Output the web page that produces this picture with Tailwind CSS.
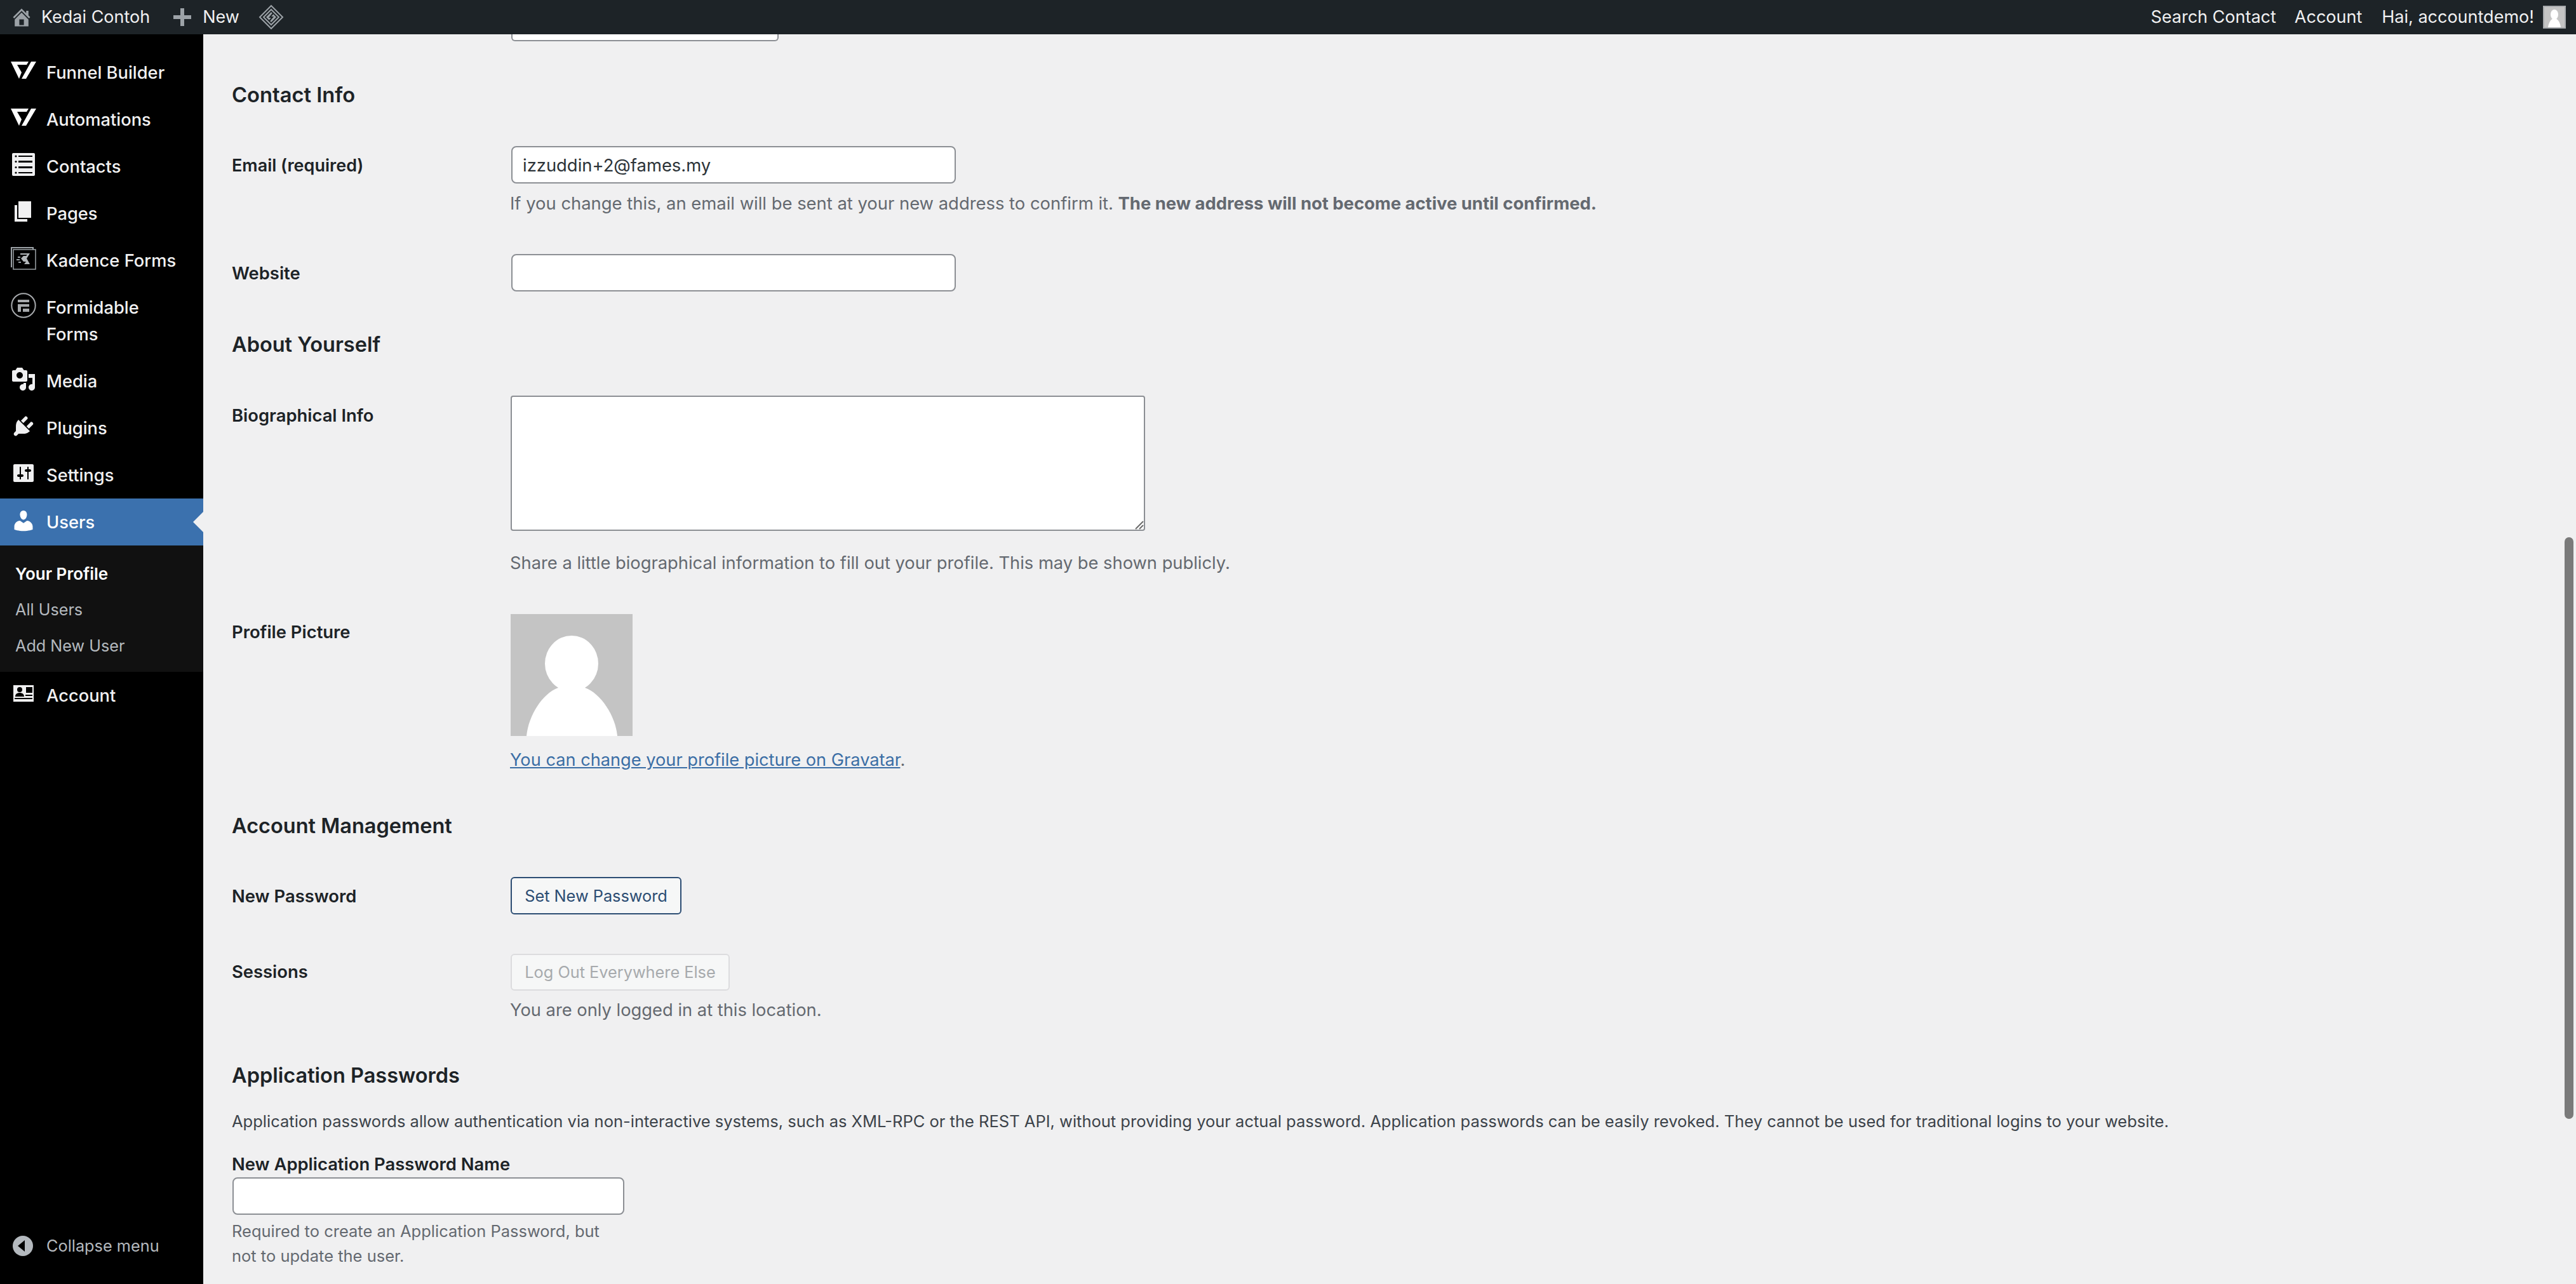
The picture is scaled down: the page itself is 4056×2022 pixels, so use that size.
<!DOCTYPE html>
<html lang="en">
<head>
  <meta charset="UTF-8" />
  <title>Profile</title>
  <script src="https://cdn.jsdelivr.net/npm/@tailwindcss/browser@4"></script>
</head>
<body class="relative h-[2022px] w-[4056px] overflow-hidden bg-[#f0f0f1] font-['Inter',sans-serif] text-[27.4px] leading-[40px] text-[#1d2327]">

  <!-- Admin bar -->
  <header class="flex h-[54px] items-center justify-between bg-[#1d2327] text-[27px] text-[#f0f0f1]">
    <div class="flex items-center">
      <svg class="ml-[16px] h-[36px] w-[36px] fill-[#9ca2a7]" viewBox="0 0 20 20"><path d="M16 8.5l1.53 1.53-1.06 1.06L10 4.62l-6.47 6.47-1.06-1.06L10 2.5l4 4v-2h2v4zm-6-2.46l6 5.99V18H4v-5.97zM12 17v-5H8v5h4z"/></svg>
      <span class="ml-[13px]">Kedai Contoh</span>
      <svg class="ml-[37px] h-[28px] w-[28px] fill-[#9ca2a7]" viewBox="0 0 28 28"><path d="M11 0h6v11h11v6H17v11h-6V17H0v-6h11z"/></svg>
      <span class="ml-[18px]">New</span>
      <svg class="ml-[30px] h-[40px] w-[40px]" viewBox="0 0 40 40" fill="none" stroke="#9ca2a7" stroke-width="2"><path d="M20 2 38 20 20 38 2 20z"/><path d="M20 8 32 20 20 32 8 20z"/><path fill="#9ca2a7" stroke="none" d="M20 12 28 20 20 28 12 20z"/><path stroke="#1d2327" stroke-width="2" d="M23 14l-5 6h4l-5 6"/></svg>
    </div>
    <div class="flex items-center">
      <span>Search Contact</span>
      <span class="ml-[29px]">Account</span>
      <span class="ml-[31px]">Hai, accountdemo!</span>
      <div class="ml-[14px] mr-[16px] flex h-[36px] w-[36px] items-end justify-center overflow-hidden border-2 border-[#a7aaad] bg-[#c4c4c4]">
        <svg class="h-[28px] w-[24px] fill-white" viewBox="0 0 24 28"><ellipse cx="12" cy="8" rx="6" ry="8"/><path d="M2 28C3 20 7 14 12 14s9 6 10 14z"/></svg>
      </div>
    </div>
  </header>

  <div class="flex h-[1968px]">
    <!-- Sidebar -->
    <aside class="relative flex w-[320px] shrink-0 flex-col bg-black pt-[23px] text-[27.3px] font-medium text-[#f0f0f1]">
      <a class="flex h-[74px] items-center">
        <span class="flex w-[73px] shrink-0 justify-center -mt-[6px]"><svg class="h-[28px] w-[40px] fill-white" viewBox="0 0 40 28"><path d="M0 0H28L25 5H10L17 17 13 27zM32 0H40L24 27H17z"/></svg></span>
        <span class="pt-[1px]">Funnel Builder</span>
      </a>
      <a class="flex h-[74px] items-center">
        <span class="flex w-[73px] shrink-0 justify-center -mt-[6px]"><svg class="h-[28px] w-[40px] fill-white" viewBox="0 0 40 28"><path d="M0 0H28L25 5H10L17 17 13 27zM32 0H40L24 27H17z"/></svg></span>
        <span class="pt-[1px]">Automations</span>
      </a>
      <a class="flex h-[74px] items-center">
        <span class="flex w-[73px] shrink-0 justify-center -mt-[6px]"><svg class="h-[36px] w-[36px]" viewBox="0 0 36 36"><rect width="36" height="36" rx="2" fill="#f0f0f1"/><path fill="#000" d="M10 4h22v2H10zM10 12h22v3H10zM10 21h22v3H10zM10 30h22v2H10z"/><circle cx="6" cy="5" r="1.6" fill="#000"/><circle cx="6" cy="13.5" r="1.6" fill="#000"/><circle cx="6" cy="22.5" r="1.6" fill="#000"/><circle cx="6" cy="31" r="1.6" fill="#000"/></svg></span>
        <span class="pt-[1px]">Contacts</span>
      </a>
      <a class="flex h-[74px] items-center">
        <span class="flex w-[73px] shrink-0 justify-center -mt-[6px]"><svg class="h-[40px] w-[40px] fill-[#f0f0f1]" viewBox="0 0 20 20"><path d="M6 15V2h10v13H6zm-1 1h8v2H3V5h2v11z"/></svg></span>
        <span class="pt-[1px]">Pages</span>
      </a>
      <a class="flex h-[74px] items-center">
        <span class="flex w-[73px] shrink-0 justify-center -mt-[6px]"><svg class="h-[36px] w-[40px]" viewBox="0 0 40 36" fill="none"><path d="M1 32V1h34v3" stroke="#9ca2a7" stroke-width="2"/><path d="M4 4h35v31H4z" stroke="#9ca2a7" stroke-width="1.5"/><path fill="#b4b8bb" d="M15 10h15l-5 8 5 9H21l3-4h-4l-4-5 4-4h4l2-2h-11z"/><path stroke="#9ca2a7" stroke-width="2" d="M11 16h4M9 20h5M12 24h4"/></svg></span>
        <span class="pt-[1px]">Kadence Forms</span>
      </a>
      <a class="flex h-[116px] items-start pt-[16px]">
        <span class="flex w-[73px] shrink-0 justify-center -mt-[2px]"><svg class="h-[40px] w-[40px]" viewBox="0 0 40 40"><circle cx="20" cy="20" r="18.7" fill="none" stroke="#a7aaad" stroke-width="2"/><path fill="#a7aaad" d="M11 11h18v4H11zM11 18h18v4H16v8h-5zM19 25h10v5H19z"/></svg></span>
        <span class="pt-[1px] leading-[42px]">Formidable<br />Forms</span>
      </a>
      <a class="flex h-[74px] items-center">
        <span class="flex w-[73px] shrink-0 justify-center -mt-[6px]"><svg class="h-[40px] w-[40px] fill-[#f0f0f1]" viewBox="0 0 20 20"><path d="M13 11V4c0-.55-.45-1-1-1h-1.67L9 1H5L3.67 3H2c-.55 0-1 .45-1 1v7c0 .55.45 1 1 1h10c.55 0 1-.45 1-1zM7 4.5c1.38 0 2.5 1.12 2.5 2.5S8.38 9.5 7 9.5 4.5 8.38 4.5 7 5.62 4.5 7 4.5zM14 6h5v10.5c0 1.38-1.12 2.5-2.5 2.5S14 17.88 14 16.5s1.12-2.5 2.5-2.5c.17 0 .34.02.5.05V9h-3V6zm-4 8.05V13h2v3.5c0 1.38-1.12 2.5-2.5 2.5S7 17.88 7 16.5 8.12 14 9.5 14c.17 0 .34.02.5.05z"/></svg></span>
        <span class="pt-[1px]">Media</span>
      </a>
      <a class="flex h-[74px] items-center">
        <span class="flex w-[73px] shrink-0 justify-center -mt-[6px]"><svg class="h-[40px] w-[40px] fill-[#f0f0f1]" viewBox="0 0 20 20"><path d="M13.11 4.36L9.87 7.6 8 5.73l3.24-3.24c.35-.34 1.05-.2 1.56.32.52.51.66 1.21.31 1.55zm-8 1.77l.91-1.12 9.01 9.01-1.19.84c-.71.71-2.63 1.16-3.82 1.16H6.14L4.9 17.26c-.59.59-1.54.59-2.12 0-.59-.58-.59-1.53 0-2.12l1.24-1.24v-3.88c0-1.13.4-3.19 1.09-3.89zm7.26 3.97l3.24-3.24c.34-.35 1.04-.21 1.55.31.52.51.66 1.21.31 1.55l-3.24 3.25z"/></svg></span>
        <span class="pt-[1px]">Plugins</span>
      </a>
      <a class="flex h-[74px] items-center">
        <span class="flex w-[73px] shrink-0 justify-center -mt-[6px]"><svg class="h-[40px] w-[40px] fill-[#f0f0f1]" viewBox="0 0 20 20"><path d="M18 16V4c0-.55-.45-1-1-1H3c-.55 0-1 .45-1 1v12c0 .55.45 1 1 1h14c.55 0 1-.45 1-1zM8 11h1c.55 0 1 .45 1 1s-.45 1-1 1H8v1.5c0 .28-.22.5-.5.5s-.5-.22-.5-.5V13H6c-.55 0-1-.45-1-1s.45-1 1-1h1V5.5c0-.28.22-.5.5-.5s.5.22.5.5V11zm5-2h-1c-.55 0-1-.45-1-1s.45-1 1-1h1V5.5c0-.28.22-.5.5-.5s.5.22.5.5V7h1c.55 0 1 .45 1 1s-.45 1-1 1h-1v5.5c0 .28-.22.5-.5.5s-.5-.22-.5-.5V9z"/></svg></span>
        <span class="pt-[1px]">Settings</span>
      </a>
      <a class="relative flex h-[74px] items-center bg-[#3b71ae] text-white">
        <span class="flex w-[73px] shrink-0 justify-center -mt-[4px]"><svg class="h-[40px] w-[40px] fill-white" viewBox="0 0 20 20"><path d="M10 9.25c-2.27 0-2.73-3.44-2.73-3.44C7 4.02 7.82 2 9.97 2c2.16 0 2.98 2.02 2.71 3.81 0 0-.41 3.44-2.68 3.44zm0 2.57L12.72 10c2.39 0 4.52 2.33 4.52 4.53v2.49s-3.65 1.13-7.24 1.13c-3.65 0-7.24-1.13-7.24-1.13v-2.49c0-2.25 1.94-4.48 4.47-4.48z"/></svg></span>
        <span class="pt-[1px]">Users</span>
        <span class="absolute right-0 top-[21px] h-0 w-0 border-y-[16px] border-r-[16px] border-y-transparent border-r-[#f0f0f1]"></span>
      </a>
      <div class="flex h-[199px] flex-col bg-[#111111] pl-[24px] pt-[16px] text-[25.2px] font-normal leading-[57px] text-[#b4b9be]">
        <a class="text-[26px] font-semibold text-white">Your Profile</a>
        <a>All Users</a>
        <a>Add New User</a>
      </div>
      <a class="flex h-[74px] items-center">
        <span class="flex w-[73px] shrink-0 justify-center -mt-[6px]"><svg class="h-[26px] w-[32px]" viewBox="0 0 32 26"><rect width="32" height="26" fill="#f0f0f1"/><path fill="#000" d="M20 3h10v9H20zM19 15h11v2H19zM2 20h28v2H2z"/><circle cx="10" cy="7" r="4" fill="#000"/><path fill="#000" d="M3 18c0-4 3-6 7-6s7 2 7 6z"/></svg></span>
        <span class="pt-[1px]">Account</span>
      </a>
      <button class="absolute bottom-[40px] left-[20px] flex items-center text-[25.3px] font-normal text-[#b4b9be]">
        <svg class="h-[32px] w-[32px]" viewBox="0 0 32 32"><circle cx="16" cy="16" r="16" fill="#b4b9be"/><path d="M8 16 19 7v18z" fill="#000"/></svg>
        <span class="ml-[21px]">Collapse menu</span>
      </button>
    </aside>

    <!-- Main form -->
    <main class="min-w-0 flex-1 pl-[45px]">
      <div class="ml-[440px] h-[11px] w-[421px] rounded-b-[6px] border-x-2 border-b-2 border-[#8c8f94] bg-white"></div>

      <h2 class="mt-[62px] text-[32.7px] font-semibold leading-[44px]">Contact Info</h2>
      <div class="mt-[59px] flex">
        <div class="w-[438px] shrink-0 pt-[11px] text-[27px] font-semibold">Email (required)</div>
        <div>
          <div class="ml-[2px] flex h-[59px] w-[700px] items-center rounded-[8px] border-2 border-[#8c8f94] bg-white px-[16px] text-[#2c3338]">izzuddin+2@fames.my</div>
          <p class="mt-[12px] leading-[39px] text-[#646970]">If you change this, an email will be sent at your new address to confirm it. <strong class="font-bold">The new address will not become active until confirmed.</strong></p>
        </div>
      </div>
      <div class="mt-[60px] flex">
        <div class="w-[438px] shrink-0 pt-[10px] font-semibold">Website</div>
        <div class="ml-[2px] h-[59px] w-[700px] rounded-[8px] border-2 border-[#8c8f94] bg-white"></div>
      </div>

      <h2 class="mt-[62px] text-[32.5px] font-semibold leading-[44px]">About Yourself</h2>
      <div class="mt-[58px] flex">
        <div class="w-[438px] shrink-0 pt-[11px] font-semibold">Biographical Info</div>
        <div>
          <div class="relative ml-[1px] h-[213px] w-[999px] rounded-[4px] border-2 border-[#8c8f94] bg-white">
            <svg class="absolute bottom-0 right-0 h-[16px] w-[16px]" viewBox="0 0 16 16" stroke="#6b6b6b" stroke-width="2"><path d="M15 3 3 15M15 9 9 15"/></svg>
          </div>
          <p class="mt-[31px] text-[27.3px] leading-[39px] text-[#646970]">Share a little biographical information to fill out your profile. This may be shown publicly.</p>
        </div>
      </div>
      <div class="mt-[61px] flex">
        <div class="w-[438px] shrink-0 pt-[8px] font-semibold">Profile Picture</div>
        <div>
          <svg class="ml-[1px] h-[192px] w-[192px]" viewBox="0 0 192 192"><rect width="192" height="192" fill="#c4c4c4"/><ellipse cx="96" cy="78" rx="42" ry="44" fill="#fff"/><path d="M25 192C28 160 50 125 75 116h42c25 9 48 44 51 76z" fill="#fff"/></svg>
          <p class="mt-[18px] text-[27.2px] leading-[39px] text-[#646970]"><a class="text-[#3b6ea5] underline">You can change your profile picture on Gravatar</a>.</p>
        </div>
      </div>

      <h2 class="mt-[63px] text-[32.5px] font-semibold leading-[44px]">Account Management</h2>
      <div class="mt-[58px] flex">
        <div class="w-[438px] shrink-0 pt-[10px] font-semibold">New Password</div>
        <button class="ml-[1px] h-[59px] w-[269px] rounded-[6px] border-2 border-[#2c4d73] bg-[#f6f7f7] text-[25.3px] text-[#2c4d73]">Set New Password</button>
      </div>
      <div class="mt-[62px] flex">
        <div class="w-[438px] shrink-0 pt-[8px] font-semibold">Sessions</div>
        <div>
          <button class="ml-[1px] h-[58px] w-[345px] rounded-[6px] border-2 border-[#dcdcde] bg-[#f6f7f7] text-[25.3px] text-[#a7aaad]">Log Out Everywhere Else</button>
          <p class="mt-[11px] text-[27.3px] leading-[39px] text-[#646970]">You are only logged in at this location.</p>
        </div>
      </div>

      <h2 class="mt-[62px] text-[32.5px] font-semibold leading-[44px]">Application Passwords</h2>
      <p class="mt-[30px] text-[25.5px] leading-[39px] text-[#3c434a]">Application passwords allow authentication via non-interactive systems, such as XML-RPC or the REST API, without providing your actual password. Application passwords can be easily revoked. They cannot be used for traditional logins to your website.</p>
      <div class="mt-[28px] font-semibold">New Application Password Name</div>
      <div class="mt-[1px] ml-[1px] h-[59px] w-[617px] rounded-[8px] border-2 border-[#8c8f94] bg-white"></div>
      <p class="mt-[6px] w-[600px] text-[25.5px] leading-[39px] text-[#646970]">Required to create an Application Password, but not to update the user.</p>
    </main>
  </div>

  <!-- Overlay scrollbar thumb -->
  <div class="absolute left-[4038px] top-[846px] h-[916px] w-[14px] rounded-full bg-[#7a7a7a]"></div>
</body>
</html>
